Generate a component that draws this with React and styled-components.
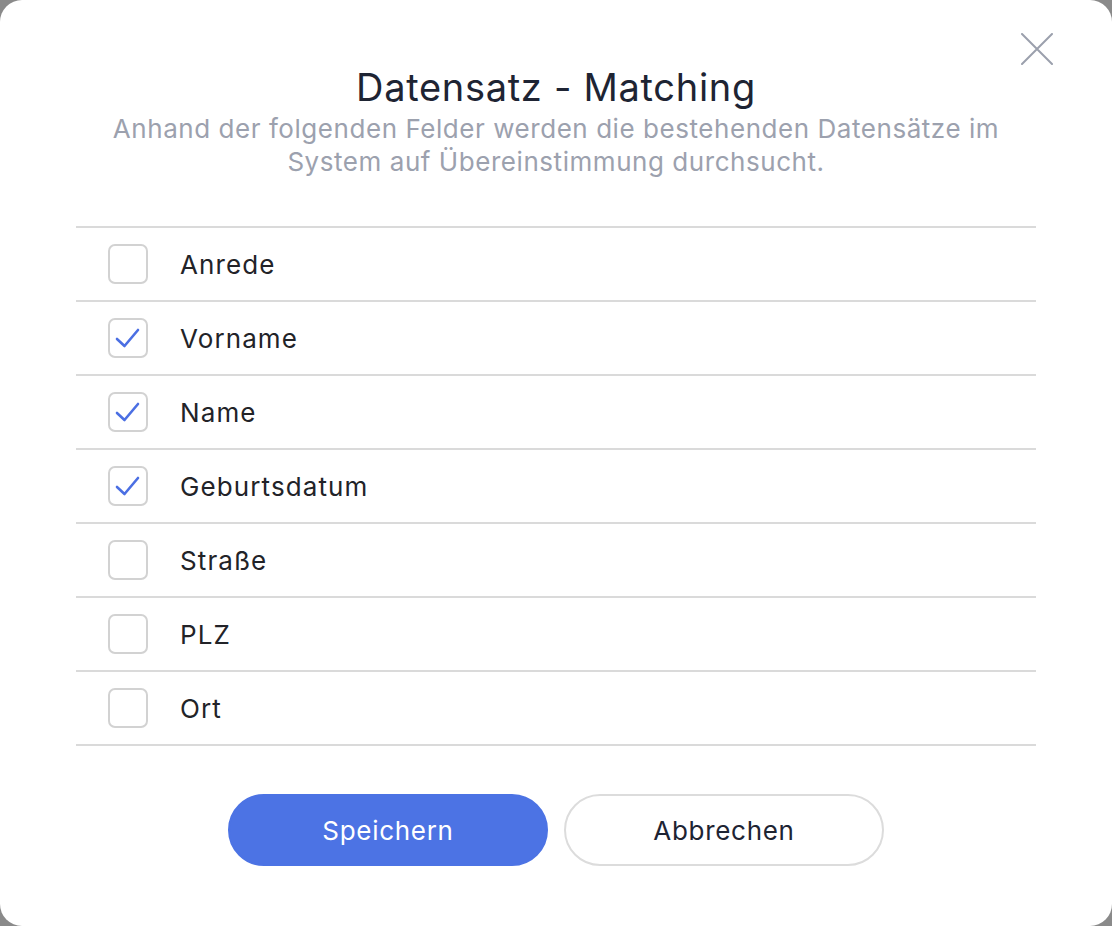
import React, { useState } from "react";
import styled, { createGlobalStyle } from "styled-components";

const Global = createGlobalStyle`
  html, body { margin: 0; padding: 0; background: #8a8a8a; }
  body { font-family: Inter, "Noto Sans", sans-serif; }
  * { box-sizing: border-box; }
`;

const Dialog = styled.div`
  position: relative;
  width: 1112px;
  height: 926px;
  background: #ffffff;
  border-radius: 22px;
  padding: 65px 76px 60px;
  display: flex;
  flex-direction: column;
`;

const CloseButton = styled.button`
  position: absolute;
  top: 33px;
  right: 59px;
  width: 32px;
  height: 32px;
  padding: 0;
  border: none;
  background: transparent;
  cursor: pointer;
  display: flex;
  align-items: center;
  justify-content: center;
`;

const Title = styled.h1`
  margin: 0;
  text-align: center;
  font-size: 38px;
  line-height: 44px;
  font-weight: 400;
  letter-spacing: 0.7px;
  color: #1e2433;
`;

const Subtitle = styled.p`
  margin: 3px 0 0;
  text-align: center;
  font-size: 26px;
  line-height: 33px;
  font-weight: 400;
  letter-spacing: 0.55px;
  color: #9ca1ae;
  padding: 0 20px;
`;

const List = styled.div`
  margin-top: 48px;
  border-top: 2px solid #dadada;
  display: flex;
  flex-direction: column;
`;

const Row = styled.label`
  height: 74px;
  border-bottom: 2px solid #dadada;
  display: flex;
  align-items: center;
  padding-left: 32px;
  gap: 32px;
  cursor: pointer;
`;

const Box = styled.span`
  width: 40px;
  height: 40px;
  border: 2px solid #d2d2d2;
  border-radius: 7px;
  display: flex;
  align-items: center;
  justify-content: center;
  flex-shrink: 0;
  background: #fff;
`;

const BoxInner = styled.span`
  position: relative;
  width: 36px;
  height: 36px;
  display: flex;
  align-items: center;
  justify-content: center;
`;

const Label = styled.span`
  font-size: 26px;
  letter-spacing: 1.1px;
  color: #222328;
  font-weight: 400;
`;

const Actions = styled.div`
  margin-top: 48px;
  display: flex;
  justify-content: center;
  gap: 16px;
`;

const Button = styled.button`
  width: 320px;
  height: 72px;
  border-radius: 36px;
  font-family: Inter, "Noto Sans", sans-serif;
  font-size: 26px;
  letter-spacing: 0.7px;
  font-weight: 400;
  cursor: pointer;
  border: 2px solid ${(p) => (p.$primary ? "#4c73e4" : "#dcdcdc")};
  background: ${(p) => (p.$primary ? "#4c73e4" : "#ffffff")};
  color: ${(p) => (p.$primary ? "#ffffff" : "#1e2433")};
`;

const fields = [
  ["Anrede", false],
  ["Vorname", true],
  ["Name", true],
  ["Geburtsdatum", true],
  ["Straße", false],
  ["PLZ", false],
  ["Ort", false],
];

function Check() {
  return (
    <svg width="40" height="40" viewBox="0 0 40 40" style={{ position: "absolute" }}>
      <path d="M9 21 L16.5 28 L30 12" fill="none" stroke="#4b6fe3" strokeWidth="2.6" strokeLinecap="round" strokeLinejoin="round" />
    </svg>
  );
}

export default function App() {
  const [state, setState] = useState(fields.map((f) => f[1]));
  return (
    <>
      <Global />
      <Dialog>
        <CloseButton aria-label="Schließen">
          <svg width="32" height="32" viewBox="0 0 32 32">
            <path d="M1 1 L31 31 M31 1 L1 31" stroke="#9ba0ad" strokeWidth="2" strokeLinecap="round" />
          </svg>
        </CloseButton>
        <Title>Datensatz - Matching</Title>
        <Subtitle>
          Anhand der folgenden Felder werden die bestehenden Datensätze im System auf Übereinstimmung durchsucht.
        </Subtitle>
        <List>
          {fields.map(([name], i) => (
            <Row key={name} onClick={() => setState((s) => s.map((v, j) => (j === i ? !v : v)))}>
              <Box>
                <BoxInner>{state[i] && <Check />}</BoxInner>
              </Box>
              <Label>{name}</Label>
            </Row>
          ))}
        </List>
        <Actions>
          <Button $primary>Speichern</Button>
          <Button>Abbrechen</Button>
        </Actions>
      </Dialog>
    </>
  );
}
